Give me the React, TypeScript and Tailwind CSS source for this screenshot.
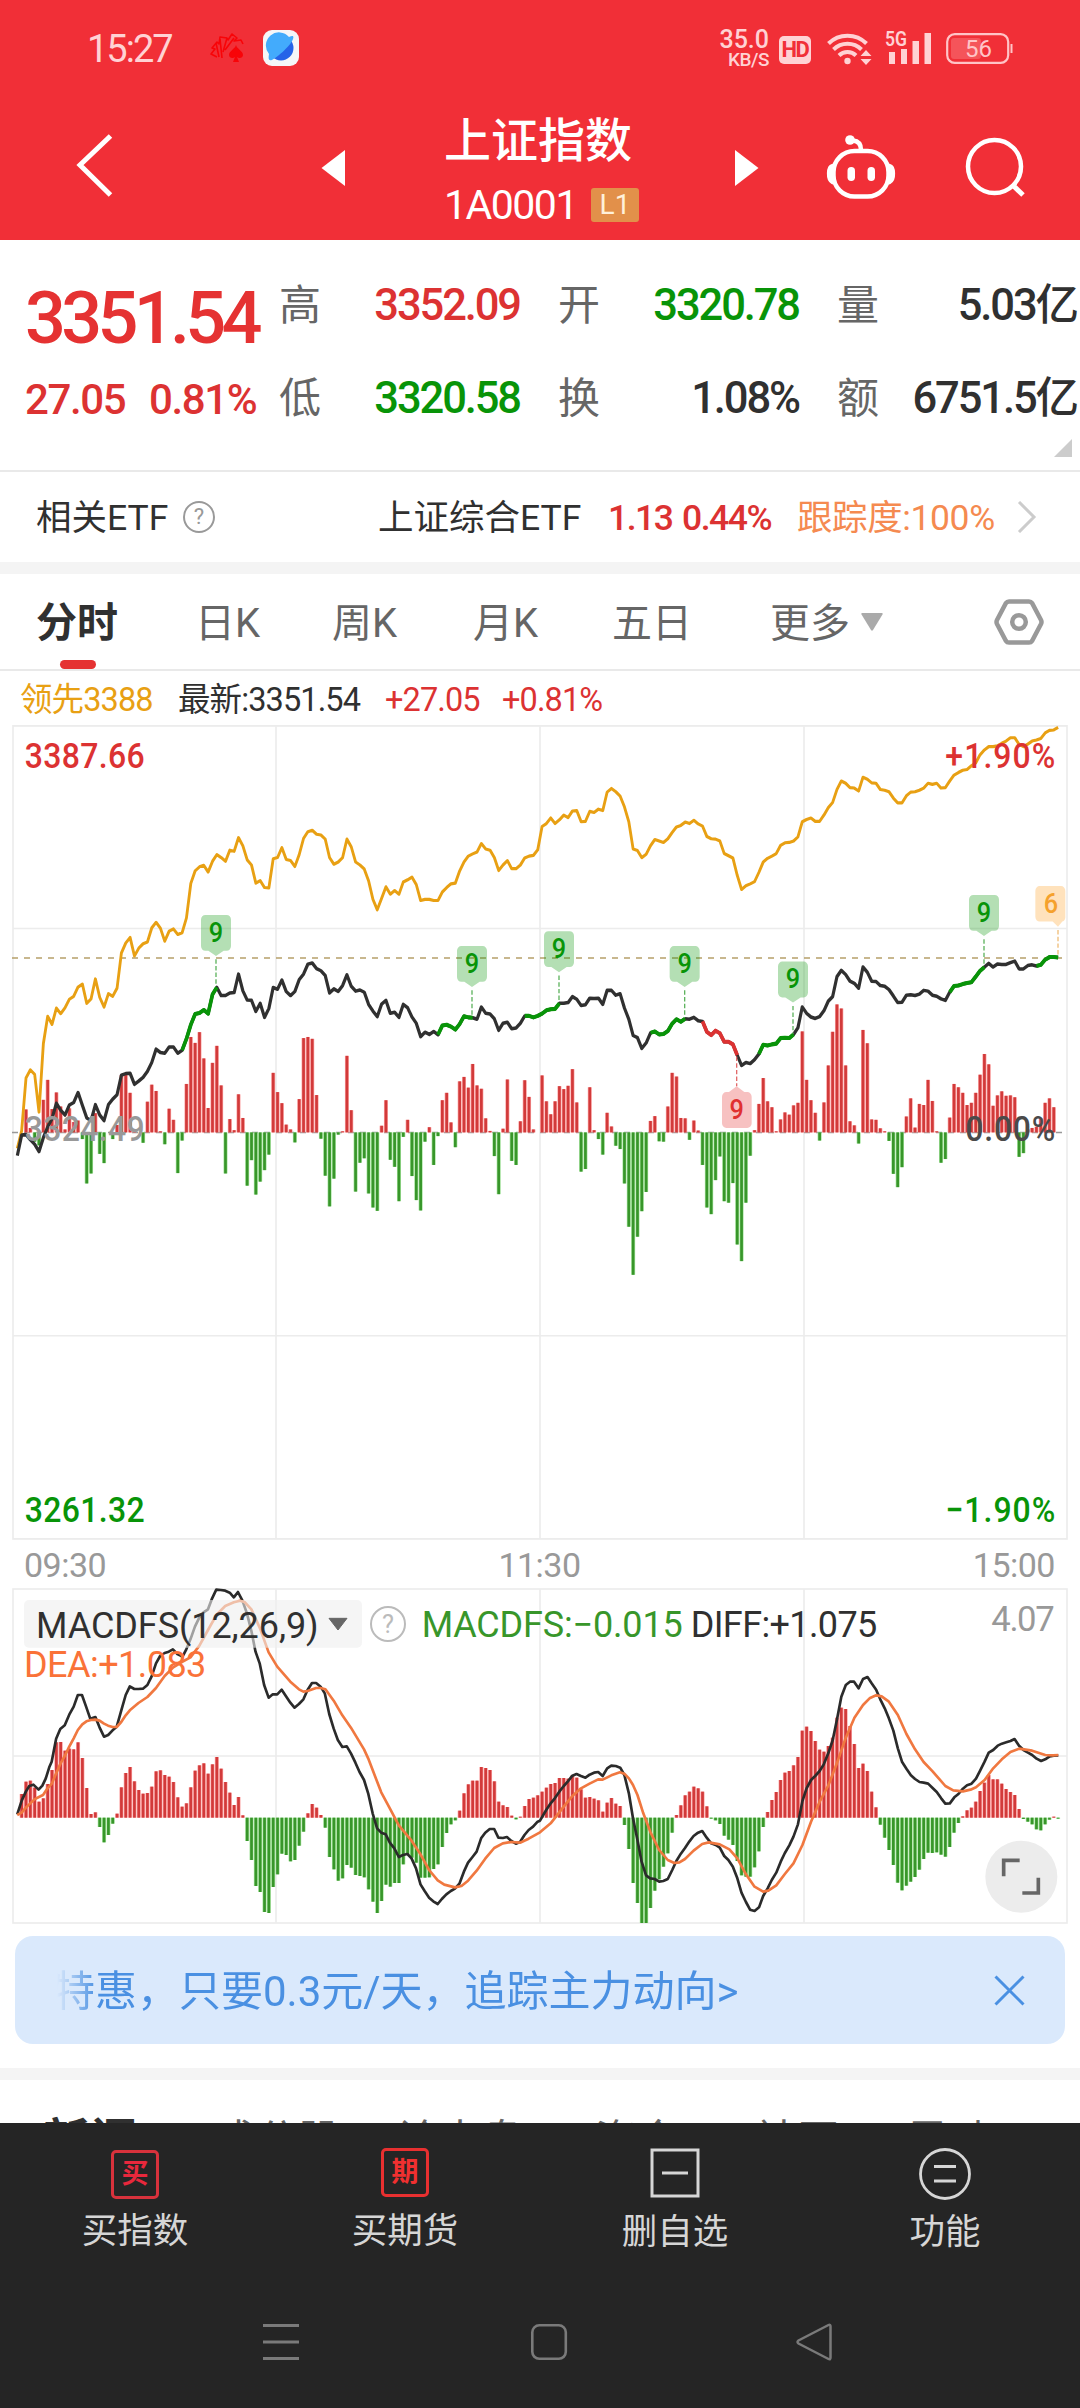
import type { ReactNode } from "react";

// Chart series are sampled once per minute, 241 samples from 09:30 to 15:00.
// The chart canvases use 3 units per css pixel horizontally.
const STEP = 13.01;
const START = 52;
const minuteX = (i: number) => START + STEP * i;

const LEAD = [
  1158, 1110, 968, 946, 958, 1060, 875, 801, 823, 779, 794, 778, 755, 747, 722, 714, 766, 754, 700, 750,
  776, 740, 747, 725, 630, 603, 588, 638, 617, 605, 600, 562, 547, 563, 598, 571, 565, 580, 575, 535,
  442, 408, 397, 393, 411, 382, 364, 372, 382, 352, 355, 318, 340, 378, 392, 441, 434, 453, 454, 375,
  372, 345, 377, 380, 396, 364, 320, 302, 298, 309, 311, 322, 372, 390, 384, 372, 322, 343, 384, 392,
  403, 435, 485, 513, 482, 451, 471, 461, 471, 438, 432, 425, 445, 488, 485, 485, 488, 488, 465, 453,
  443, 441, 408, 384, 368, 362, 357, 334, 349, 352, 372, 407, 392, 380, 402, 402, 392, 373, 368, 366,
  351, 288, 280, 265, 280, 270, 257, 264, 246, 245, 275, 274, 247, 250, 241, 245, 195, 185, 194, 206,
  235, 275, 349, 353, 372, 363, 340, 323, 327, 331, 321, 304, 289, 285, 276, 280, 271, 281, 287, 315,
  321, 322, 327, 361, 367, 373, 420, 458, 448, 443, 437, 412, 384, 374, 368, 361, 339, 332, 331, 327,
  316, 275, 269, 265, 274, 274, 257, 237, 223, 188, 165, 171, 183, 184, 192, 155, 160, 170, 171, 188,
  190, 194, 211, 224, 224, 205, 195, 194, 190, 184, 171, 174, 171, 184, 183, 165, 149, 142, 136, 134,
  124, 116, 94, 81, 72, 72, 70, 63, 57, 48, 48, 66, 72, 65, 57, 54, 50, 35, 28, 27, 20,
];

const PRICE = [
  1178, 1122, 1121, 1135, 1147, 1167, 1129, 1100, 1078, 1036, 1055, 1068, 1041, 1034, 1007, 1042, 1076, 1083, 1040, 1068,
  1083, 1040, 1025, 1013, 960, 956, 955, 985, 976, 966, 950, 926, 890, 899, 901, 884, 884, 901, 893, 862,
  824, 795, 792, 784, 794, 742, 723, 745, 745, 738, 737, 687, 732, 757, 758, 788, 766, 804, 780, 723,
  728, 703, 734, 745, 734, 702, 687, 660, 657, 672, 678, 691, 738, 727, 734, 718, 689, 720, 733, 730,
  736, 769, 787, 802, 768, 758, 793, 790, 804, 769, 778, 803, 820, 856, 844, 850, 842, 851, 826, 824,
  829, 837, 822, 801, 804, 805, 809, 776, 793, 795, 808, 839, 820, 817, 835, 833, 820, 800, 800, 804,
  800, 794, 785, 782, 781, 766, 766, 764, 748, 755, 772, 770, 752, 753, 752, 769, 731, 731, 744, 740,
  779, 809, 853, 859, 888, 873, 846, 842, 850, 849, 841, 821, 809, 816, 808, 809, 804, 813, 815, 843,
  852, 840, 847, 870, 870, 877, 906, 934, 926, 929, 918, 903, 878, 880, 877, 875, 860, 859, 860, 850,
  832, 776, 793, 803, 807, 802, 786, 760, 748, 694, 677, 688, 706, 712, 725, 668, 682, 706, 707, 718,
  720, 729, 746, 764, 763, 744, 743, 745, 741, 731, 733, 744, 747, 754, 758, 736, 719, 718, 714, 711,
  709, 694, 678, 668, 658, 668, 660, 661, 661, 656, 652, 673, 673, 664, 662, 665, 662, 648, 641, 641, 642,
];

const FLOW = [
  0, 0, 62, 12, -25, -35, 88, 142, 63, 108, 70, 8, 65, 28, 32, -18, -138, -111, 52, -58,
  -83, 0, -18, 20, 155, 155, 107, 2, 0, -28, 83, 129, 112, 3, -32, 64, 34, -110, -22, 131,
  258, 242, 271, 200, 66, 188, 234, 127, -111, 36, 6, 103, 39, -144, -75, -168, -133, -102, -60, 161,
  109, 79, 21, 8, -27, 90, 255, 258, 253, 101, -17, -117, -200, -125, -6, 3, 207, 60, -160, -82,
  -70, -165, -203, -212, 18, 87, -74, -93, -186, -12, 34, -118, -183, -211, -25, 14, -88, -10, 87, 107,
  27, -40, 138, 150, 121, 185, 127, 118, 38, 4, -64, -167, 10, 143, -77, -88, 30, 141, 96, 8,
  0, 154, 84, 49, 84, 125, 117, 126, 171, 81, -106, -99, 122, 6, -18, -60, 53, 16, -36, -45,
  -138, -255, -385, -282, -213, -161, 31, 44, -24, -25, 70, 161, 151, 39, 38, -20, 32, 5, -88, -203,
  -221, -129, -65, -186, -190, -137, -303, -348, -190, -63, 6, 77, 147, 84, 68, 3, 35, 54, 48, 73,
  80, 273, 142, 87, 53, -22, 81, 181, 272, 346, 335, 181, 30, 19, -30, 277, 241, 35, 34, 11,
  3, -23, -112, -148, -94, 43, 92, 13, 77, 74, 142, 85, 3, -82, -72, 40, 131, 122, 107, 74,
  80, 107, 156, 212, 184, 72, 100, 111, 99, 100, 95, -66, -56, 8, 12, 15, 38, 80, 92, 68, 0,
];

const MACD = [
  0, 71, 108, 111, 90, 48, 58, 101, 143, 226, 227, 201, 207, 205, 226, 179, 89, 11, 16, -28,
  -74, -52, -18, 12, 91, 134, 152, 109, 83, 72, 74, 93, 139, 142, 128, 123, 107, 61, 33, 43,
  91, 141, 157, 163, 132, 160, 182, 147, 107, 75, 38, 62, 7, -70, -127, -205, -223, -283, -286, -208,
  -170, -108, -112, -131, -127, -84, -42, 13, 41, 30, 8, -30, -118, -155, -189, -182, -142, -150, -172, -175,
  -179, -215, -252, -286, -250, -201, -207, -196, -196, -140, -110, -120, -135, -180, -180, -179, -154, -140, -88, -46,
  -20, -8, 21, 73, 100, 111, 111, 152, 149, 143, 109, 48, 37, 32, 6, -5, 3, 35, 56, 60,
  67, 78, 90, 101, 104, 119, 119, 117, 127, 120, 85, 60, 62, 57, 52, 18, 45, 59, 42, 35,
  -22, -94, -196, -256, -316, -316, -271, -219, -185, -147, -107, -45, 8, 37, 67, 78, 93, 88, 78, 34,
  -3, -8, -19, -54, -66, -82, -130, -173, -177, -177, -149, -101, -28, 17, 53, 77, 113, 135, 140, 157,
  182, 261, 273, 260, 230, 204, 198, 215, 240, 300, 330, 326, 275, 221, 149, 162, 140, 78, 31, -21,
  -60, -97, -142, -195, -218, -204, -192, -178, -156, -124, -105, -106, -104, -111, -117, -88, -45, -16, 4, 22,
  30, 48, 80, 105, 128, 115, 115, 102, 86, 77, 68, 26, -4, -12, -20, -35, -38, -20, -6, 3, -3,
];

const DIFF_AM =
  "50,1003 63,962 75,935 85,918 97,914 112,929 123,917 133,895 143,862 150,845 163,776 175,747 188,736 201,704 214,680 226,645 238,645 250,680 262,716 277,711 289,742 302,770 314,765 327,751 339,740 352,692 365,645 377,619 390,627 402,627 415,626 428,615 440,590 453,550 465,528 478,519 490,515 502,508 515,522 530,530 541,508 553,478 566,440 579,412 591,397 604,388 616,355 628,329 641,330 654,332 667,338 679,352 691,336 704,362 717,400 730,453 742,515 754,550 767,615 780,653 792,643 805,643 818,629 830,648 843,668 855,683 868,672 881,658 893,630 906,609 918,609 931,620 943,640 956,702 969,746 981,780 994,801 1007,799 1019,820 1032,848 1044,876 1057,900 1069,940 1082,1000 1095,1045 1107,1058 1120,1063 1132,1088 1145,1105 1158,1131 1170,1125 1183,1122 1195,1135 1208,1165 1221,1213 1233,1233 1246,1253 1258,1264 1271,1272 1283,1257 1296,1243 1309,1233 1321,1226 1334,1211 1347,1175 1359,1148 1372,1131 1384,1115 1397,1075 1409,1058 1422,1047 1435,1047 1447,1073 1460,1074 1472,1071 1485,1083 1498,1091 1510,1086 1523,1065 1535,1050 1548,1040 1561,1025";
const DIFF_PM =
  "0,1022 18,990 31,970 43,955 56,935 69,918 81,904 94,887 106,882 119,888 132,893 144,884 157,878 169,876 182,888 195,865 207,857 220,858 233,863 245,885 258,940 270,1015 283,1080 295,1145 308,1186 320,1195 333,1197 346,1205 358,1203 371,1197 384,1170 396,1143 409,1121 421,1104 434,1084 446,1068 459,1058 471,1053 484,1073 497,1090 510,1095 522,1103 535,1128 547,1140 560,1160 573,1195 585,1238 598,1266 610,1289 623,1293 636,1282 648,1248 661,1225 673,1200 686,1178 699,1145 711,1119 724,1096 736,1070 749,1033 762,963 774,925 787,900 799,888 812,873 824,853 837,820 850,780 862,720 875,650 888,615 900,605 912,605 925,625 938,597 951,591 963,610 976,629 988,658 1001,685 1013,715 1026,752 1039,805 1051,845 1064,866 1077,886 1089,897 1102,906 1114,908 1127,911 1140,924 1152,936 1165,955 1177,971 1190,970 1203,952 1215,942 1228,926 1240,916 1253,911 1266,896 1278,872 1291,845 1303,818 1316,810 1329,797 1341,791 1354,787 1366,783 1378,777 1391,797 1404,810 1417,818 1429,825 1442,836 1455,843 1467,838 1480,829 1492,827 1505,826";
const DEA_AM =
  "50,1005 63,998 75,983 88,970 100,958 113,951 125,945 138,925 151,910 163,880 176,850 188,828 201,800 214,775 226,750 239,733 251,724 264,720 277,719 289,722 302,731 314,737 327,741 339,741 352,726 365,706 377,691 402,669 428,651 453,624 478,588 503,562 528,546 553,532 579,497 604,450 629,404 654,378 679,367 697,362 710,366 730,388 755,445 780,517 805,560 843,605 868,628 881,635 893,633 918,624 931,624 945,628 969,662 994,706 1019,743 1057,808 1069,835 1107,937 1132,985 1158,1036 1195,1082 1221,1123 1246,1170 1271,1201 1290,1214 1321,1222 1340,1218 1359,1202 1384,1172 1409,1136 1435,1104 1460,1090 1485,1086 1510,1088 1535,1076 1568,1057";
const DEA_PM =
  "31,1030 69,980 94,948 119,925 144,911 169,898 182,899 207,886 232,877 245,881 258,895 270,915 283,945 300,1000 321,1057 346,1110 371,1140 390,1149 405,1147 421,1137 446,1112 471,1092 490,1087 522,1093 550,1108 573,1135 598,1183 623,1220 648,1235 663,1232 686,1216 711,1182 736,1150 762,1095 787,1025 812,965 837,917 862,850 888,773 913,713 938,675 957,655 976,646 992,649 1013,665 1039,705 1064,762 1089,808 1114,846 1140,874 1177,918 1200,931 1228,934 1250,929 1266,922 1291,900 1316,865 1341,838 1366,816 1391,806 1429,812 1467,825 1490,826 1505,825";

// The indicator lines are stored per session; afternoon x values restart at 0.
const SESSION = 1568;
const SESSION_SCALE = 1620 / SESSION;

function joinSessions(am: string, pm: string) {
  const read = (s: string, shift: number) =>
    s.split(" ").map((pair) => {
      const [x, y] = pair.split(",").map(Number);
      return `${((x + shift) * SESSION_SCALE).toFixed(1)},${y}`;
    });
  return [...read(am, 0), ...read(pm, SESSION)].join(" ");
}

function linePoints(series: number[], from = 0, to = series.length - 1) {
  return series
    .slice(from, to + 1)
    .map((y, k) => `${minuteX(from + k).toFixed(1)},${y}`)
    .join(" ");
}

function Bars({ data, base }: { data: number[]; base: number }) {
  const shown = data.map((v, i) => ({ v, i })).filter((d) => d.v !== 0);
  return (
    <g>
      {shown.map(({ v, i }) => (
        <g key={i}>
          <rect
            x={minuteX(i) - 6}
            y={v > 0 ? base - v : base}
            width={12}
            height={Math.abs(v)}
            fill={v > 0 ? "#fba3a3" : "#a4e39c"}
          />
          <rect
            x={minuteX(i) - 4}
            y={v > 0 ? base - v : base}
            width={8}
            height={Math.abs(v)}
            fill={v > 0 ? "#d23a3a" : "#38962a"}
          />
        </g>
      ))}
    </g>
  );
}

type LabelProps = {
  x: number;
  y: number;
  w: number;
  fill: string;
  size?: number;
  weight?: number;
  children: string;
};

function Label({ x, y, w, fill, size = 96, weight = 500, children }: LabelProps) {
  return (
    <text x={x} y={y} textLength={w} fill={fill} fontSize={size} fontWeight={weight}>
      {children}
    </text>
  );
}

const GREEN_RUNS = [[38, 46], [97, 105], [117, 125], [146, 154], [171, 179], [215, 223], [235, 240]];

const MARKERS = [
  { x: 648, top: 527, end: 718 },
  { x: 1416, top: 611, end: 800 },
  { x: 1677, top: 571, end: 762 },
  { x: 2054, top: 611, end: 805 },
  { x: 2379, top: 653, end: 848 },
  { x: 2952, top: 473, end: 665 },
];

function PriceChart() {
  return (
    <svg className="block h-[820px] w-[1080px]" viewBox="0 0 3240 2217" preserveAspectRatio="none">
      <g stroke="#ececec" strokeWidth={5} fill="none">
        <rect x={39} y={16} width={3162} height={2198} />
        <path d="M828 16V2214M1620 16V2214M2412 16V2214" />
        <path d="M39 564H3201M39 1665H3201" strokeWidth={4} />
      </g>
      <path d="M36 643.5H3204" stroke="#b7a06a" strokeWidth={4} strokeDasharray="18 18" />
      <path d="M36 1115H3204" stroke="#999" strokeWidth={4} strokeDasharray="18 18" />
      <Bars data={FLOW} base={1115} />
      <g fill="none" strokeLinejoin="round">
        <polyline points={linePoints(LEAD)} stroke="#e8a013" strokeWidth={8.5} />
        <polyline points={linePoints(PRICE)} stroke="#303030" strokeWidth={9.5} />
        {GREEN_RUNS.map(([a, b]) => (
          <polyline key={a} points={linePoints(PRICE, a, b)} stroke="#089408" strokeWidth={11} />
        ))}
        <polyline points={linePoints(PRICE, 158, 166)} stroke="#dc3232" strokeWidth={11} />
      </g>

      {MARKERS.map((m) => (
        <g key={m.x}>
          <path
            d={`M${m.x} ${m.top + 120}V${m.end}`}
            stroke="#5fb35f"
            strokeWidth={4}
            strokeDasharray="12 6"
          />
          <path
            d={`M${m.x - 32} ${m.top}h64a13 13 0 0 1 13 13v71a13 13 0 0 1-13 13h-9l-23 14l-23-14h-9a13 13 0 0 1-13-13v-71a13 13 0 0 1 13-13z`}
            fill="#089408"
            fillOpacity={0.3}
          />
          <text x={m.x} y={m.top + 72} textAnchor="middle" fontSize={76} fontWeight={500} fill="#089408">
            9
          </text>
        </g>
      ))}
      <path d="M2210 910V990" stroke="#e26a6a" strokeWidth={4} strokeDasharray="12 6" />
      <path
        d="M2179 1006h8l23-16l23 16h9a13 13 0 0 1 13 13v71a13 13 0 0 1-13 13h-63a13 13 0 0 1-13-13v-71a13 13 0 0 1 13-13z"
        fill="#e53333"
        fillOpacity={0.3}
      />
      <text x={2210} y={1078} textAnchor="middle" fontSize={76} fontWeight={500} fill="#e03030">
        9
      </text>
      <path d="M3174 568V640" stroke="#f0be78" strokeWidth={4} strokeDasharray="12 6" />
      <path
        d="M3119 449h64a13 13 0 0 1 13 13v71a13 13 0 0 1-9 12l-13 14l-16-14h-39a13 13 0 0 1-13-13v-70a13 13 0 0 1 13-13z"
        fill="#ff9f20"
        fillOpacity={0.3}
      />
      <text x={3153} y={521} textAnchor="middle" fontSize={76} fontWeight={500} fill="#f5a12c">
        6
      </text>

      <Label x={74} y={130} w={360} fill="#dc3232">3387.66</Label>
      <Label x={2836} y={130} w={330} fill="#dc3232">+1.90%</Label>
      <Label x={74} y={1137} w={360} fill="#999">3324.49</Label>
      <Label x={2896} y={1137} w={270} fill="#4a4a4a">0.00%</Label>
      <Label x={74} y={2168} w={360} fill="#089408">3261.32</Label>
      <Label x={2836} y={2168} w={330} fill="#089408">−1.90%</Label>
    </svg>
  );
}

function MacdChart() {
  return (
    <svg className="block h-[338px] w-[1080px]" viewBox="0 324 3240 1014">
      <g stroke="#ececec" strokeWidth={5} fill="none">
        <rect x={39} y={327} width={3162} height={1002} />
        <path d="M828 327V1329M1620 327V1329M2412 327V1329M39 828H3201" />
      </g>
      <Bars data={MACD} base={1013} />
      <g fill="none" strokeWidth={8} strokeLinejoin="round">
        <polyline points={joinSessions(DIFF_AM, DIFF_PM)} stroke="#2b2b2b" />
        <polyline points={joinSessions(DEA_AM, DEA_PM)} stroke="#f07840" />
      </g>
      <rect x={72} y={360} width={1014} height={143} rx={15} fill="#eeeeee" fillOpacity={0.6} />
      <Label x={108} y={474} w={848} size={108} weight={400} fill="#303030">MACDFS(12,26,9)</Label>
      <path d="M987 415h54l-27 35z" fill="#666" stroke="#666" strokeWidth={3} strokeLinejoin="round" />
      <circle cx={1164} cy={432} r={51} fill="none" stroke="#bbb" strokeWidth={6} />
      <text x={1164} y={458} textAnchor="middle" fontSize={76} fill="#bbb">?</text>
      <Label x={1265} y={471} w={783} size={108} weight={400} fill="#38962a">MACDFS:−0.015</Label>
      <Label x={2072} y={471} w={560} size={108} weight={400} fill="#303030">DIFF:+1.075</Label>
      <Label x={2974} y={452} w={190} size={104} weight={400} fill="#999">4.07</Label>
      <Label x={72} y={590} w={547} size={108} weight={400} fill="#fa7238">DEA:+1.083</Label>
      <circle cx={3064} cy={1190} r={108} fill="#ececec" />
      <path d="M3060 1141h-48v48M3068 1239h48v-46" transform="translate(-1 0)" fill="none" stroke="#666" strokeWidth={11} />
    </svg>
  );
}

function StatusBar() {
  return (
    <div className="flex h-24 items-center pl-[87px] text-[#ffd2d4]">
      <div className="w-[122px] pt-0.5 text-[38px] leading-none tracking-[-2px]">15:27</div>
      <svg className="h-9 w-9" viewBox="0 0 36 36">
        <g fill="none" stroke="#f80408" strokeWidth={1.6} strokeLinejoin="round">
          <path d="M8 27L2 24l4-5-3-1 5-6 2 2 1-7 7 1 1 2 4-6 5 4-3 3 7-1 2 4" />
          <path d="M10 27L7 13M13 28L11 9M14 22l4-14M16 20l9-12" />
        </g>
        <path d="M27 15c1 4 7 6 7 10 0 3-4 4-6 2l2 5h-6l2-5c-2 2-6 1-6-2 0-4 6-6 7-10z" fill="#f80408" />
      </svg>
      <svg className="ml-[18px] h-9 w-9" viewBox="0 0 36 36">
        <rect width={36} height={36} rx={9} fill="#f5f6f8" />
        <circle cx={18} cy={18} r={12.5} fill="#2563e8" />
        <path d="M6 24A13 13 0 0 1 26 7c4-2 5-1 4 2-2 6-15 18-21 21-3 1-4 0-3-6z" fill="#43abfc" />
      </svg>
      <div className="ml-[417px] flex w-[57px] flex-col items-end gap-px pr-1 pt-0.5">
        <span className="text-[25px] font-medium leading-[20px]">35.0</span>
        <span className="text-[19px] font-medium leading-[17px] tracking-[-0.5px]">KB/S</span>
      </div>
      <div className="ml-[6px] mt-[3px] flex h-7 w-8 items-center justify-center rounded-[5px] bg-[#ffd2d4] text-[22px] font-bold leading-none tracking-[-1.5px] text-[#f12f37]">
        HD
      </div>
      <svg className="ml-4 h-9 w-[46px]" viewBox="0 0 46 36">
        <g fill="none" stroke="#ffd2d4" strokeWidth={4}>
          <path d="M1.500 13.500a27 27 0 0 1 38 0M6.500 19.500a20 20 0 0 1 28 0M12 25.500a12 12 0 0 1 17 0" />
        </g>
        <circle cx={20.500} cy={31} r={3.200} fill="#ffd2d4" />
        <path d="M33.500 26h11l-5.500-6zM33.500 29h11l-5.500 6z" fill="#ffd2d4" />
      </svg>
      <svg className="ml-3 h-9 w-[48px]" viewBox="0 0 48 36">
        <text x={0} y={16} textLength={22} lengthAdjust="spacingAndGlyphs" fontSize={20} fontWeight={600} fill="#ffd2d4">
          5G
        </text>
        <path d="M4 22h6v12H4zM16 19h6v15h-6zM27.500 11h6.500v23h-6.500zM39.500 3h6.500v31h-6.500z" fill="#ffd2d4" />
      </svg>
      <svg className="ml-[13px] h-9 w-[68px]" viewBox="0 0 68 36">
        <rect x={1.200} y={4.200} width={61} height={28.600} rx={7.500} fill="none" stroke="#ffc4c7" strokeWidth={2.200} />
        <rect x={5} y={8} width={30} height={21} rx={3} fill="#f5545a" />
        <path d="M64.500 14h2v9h-2z" fill="#ffc4c7" />
        <text x={32.500} y={27} textAnchor="middle" fontSize={24} fill="#ffc4c7">56</text>
      </svg>
    </div>
  );
}

function Header() {
  return (
    <header className="h-60 bg-[#f12f37] text-white">
      <StatusBar />
      <div className="flex h-36 items-start">
        <svg className="ml-[74px] mt-[37px] h-[64px] w-10" viewBox="0 0 40 64">
          <path d="M36.500 3L6 32l30.500 30" fill="none" stroke="#fff" strokeWidth={5} />
        </svg>
        <svg className="ml-[207px] mt-[54px] h-[36px] w-6" viewBox="0 0 24 36">
          <path d="M24 0v36L.5 18z" fill="#fff" />
        </svg>
        <div className="ml-[99px] flex w-[203px] flex-col">
          <h1 className="mt-[20px] text-[47px] font-medium leading-[50px]">上证指数</h1>
          <div className="mt-[20px] flex h-[38px] items-center">
            <span className="w-[147px] text-[41px] leading-none tracking-[-1.500px]">1A0001</span>
            <span className="flex h-[34px] w-12 items-center justify-center rounded-[3px] bg-[#e2904a] text-[28px] leading-none text-[#fff0da]">
              L1
            </span>
          </div>
        </div>
        <svg className="ml-[88px] mt-[54px] h-[36px] w-6" viewBox="0 0 24 36">
          <path d="M0 0v36l23.500-18z" fill="#fff" />
        </svg>
        <svg className="ml-[66px] mt-[38px] h-[66px] w-[72px]" viewBox="0 0 72 66">
          <rect x={8.500} y={17} width={55} height={45.500} rx={21} fill="none" stroke="#fff" strokeWidth={4.500} />
          <path d="M36 16c0-6-3-9-8-9.500" fill="none" stroke="#fff" strokeWidth={4.500} />
          <circle cx={25} cy={6} r={4.800} fill="#fff" />
          <rect x={22.500} y={33} width={7.500} height={14} rx={3.700} fill="#fff" />
          <rect x={42.500} y={33} width={7.500} height={14} rx={3.700} fill="#fff" />
          <path d="M7 31c-5 1-6 15 0 18zM65 31c5 1 6 15 0 18z" fill="#fff" stroke="#fff" strokeWidth={2} />
        </svg>
        <svg className="ml-[67px] mt-[40px] h-[64px] w-16" viewBox="0 0 64 64">
          <circle cx={30.500} cy={30.500} r={26.500} fill="none" stroke="#fff" strokeWidth={4.500} />
          <path d="M48 48.500l11 10.500" stroke="#fff" strokeWidth={5} />
        </svg>
      </div>
    </header>
  );
}

const UP = "text-[#dc3232]";
const DOWN = "text-[#089408]";
const FLAT = "text-[#303030]";

function Stat({ name, value, color, width }: { name: string; value: string; color: string; width: string }) {
  return (
    <div className={`flex items-center justify-between ${width}`}>
      <span className="text-[42px] leading-none text-[#666]">{name}</span>
      <span className={`text-[43.500px] font-medium leading-none tracking-[-2.100px] ${color}`}>{value}</span>
    </div>
  );
}

function Quote() {
  return (
    <section className="relative flex h-[232px] border-b-2 border-[#e9e9e9]">
      <div className="w-[279px] pl-[25px]">
        <div className="mt-[41px] text-[72px] font-medium leading-[76px] tracking-[-4.700px] text-[#e53232]">3351.54</div>
        <div className={`mt-[21px] flex text-[42px] font-medium leading-[44px] tracking-[-1.400px] ${UP}`}>
          <span className="w-[124px]">27.05</span>
          <span>0.81%</span>
        </div>
      </div>
      <div className="flex flex-col">
        <div className="mt-[43px] flex h-[46px] gap-[38px]">
          <Stat name="高" value="3352.09" color={UP} width="w-[241px]" />
          <Stat name="开" value="3320.78" color={DOWN} width="w-[241px]" />
          <Stat name="量" value="5.03亿" color={FLAT} width="w-[240px]" />
        </div>
        <div className="mt-[47px] flex h-[46px] gap-[38px]">
          <Stat name="低" value="3320.58" color={DOWN} width="w-[241px]" />
          <Stat name="换" value="1.08%" color={FLAT} width="w-[241px]" />
          <Stat name="额" value="6751.5亿" color={FLAT} width="w-[240px]" />
        </div>
      </div>
      <svg className="absolute bottom-[13px] right-2 h-[18px] w-[18px]" viewBox="0 0 18 18">
        <path d="M18 0v18H0z" fill="#ccc" />
      </svg>
    </section>
  );
}

function EtfRow() {
  return (
    <section className="flex h-[90px] items-center pl-[36px] pt-[3px] text-[35.500px] leading-none text-[#303030]">
      <span className="w-[147px]">相关ETF</span>
      <span className="-mt-[3px] flex h-8 w-8 items-center justify-center rounded-full border-2 border-[#999] text-[22px] text-[#999]">
        ?
      </span>
      <span className="ml-[163px] w-[230px]">上证综合ETF</span>
      <span className={`w-[74px] font-medium tracking-[-1.500px] ${UP}`}>1.13</span>
      <span className={`w-[115px] font-medium tracking-[-1.500px] ${UP}`}>0.44%</span>
      <span className="w-[220px] tracking-[-0.400px] text-[#f58a50]">跟踪度:100%</span>
      <svg className="-mt-[3px] h-8 w-5" viewBox="0 0 20 32">
        <path d="M2 1l15 15L2 31" fill="none" stroke="#ccc" strokeWidth={3} />
      </svg>
    </section>
  );
}

function Tab({ width, children }: { width: string; children: ReactNode }) {
  return <div className={`flex h-full items-center pt-1 ${width}`}>{children}</div>;
}

function PeriodTabs() {
  return (
    <nav className="flex h-[97px] items-center border-b-2 border-[#e9e9e9] pl-9 text-[40px] leading-none text-[#666]">
      <div className="relative flex h-full w-[159px] items-center pt-1 text-[41px] font-bold text-[#303030]">
        分时
        <span className="absolute bottom-0 left-6 h-[9px] w-9 rounded-full bg-[#e53232]" />
      </div>
      <Tab width="w-[137px]">日K</Tab>
      <Tab width="w-[141px]">周K</Tab>
      <Tab width="w-[139px]">月K</Tab>
      <Tab width="w-[158px]">五日</Tab>
      <Tab width="w-[224px]">
        更多
        <svg className="-mt-1 ml-[11px] h-[18px] w-[22px]" viewBox="0 0 22 18">
          <path d="M1 0h20q1 0 .5 1.500L12 17q-1 1.500-2 0L.5 1.500Q0 0 1 0z" fill="#aaa" />
        </svg>
      </Tab>
      <svg className="h-[46px] w-[50px]" viewBox="0 0 50 46">
        <path
          d="M15 2.500h20q2 0 3 1.500l9 17q1 2 0 4l-9 17q-1 1.500-3 1.500H15q-2 0-3-1.500L3 25q-1-2 0-4l9-17q1-1.500 3-1.500z"
          fill="none"
          stroke="#999"
          strokeWidth={4.500}
        />
        <circle cx={25} cy={23} r={6.800} fill="none" stroke="#999" strokeWidth={4.500} />
      </svg>
    </nav>
  );
}

function Legend() {
  return (
    <div className="flex h-[49px] items-center pl-5 pt-[10px] text-[32.500px] leading-none tracking-[-0.900px]">
      <span className="w-[158px] text-[#e8a013]">领先3388</span>
      <span className="w-[207px] text-[#303030]">最新:3351.54</span>
      <span className={`w-[117px] ${UP}`}>+27.05</span>
      <span className={UP}>+0.81%</span>
    </div>
  );
}

function Promo() {
  return (
    <div className="mx-[15px] mt-[10px] flex h-[108px] items-center rounded-[18px] bg-[#dae9fc] pl-[42px] text-[42px] leading-none text-[#4a90e2]">
      <div className="w-[937px] pt-1 [mask-image:linear-gradient(to_right,transparent_0,black_40px)]">
        <span className="-ml-1">特惠，只要0.3元/天，追踪主力动向&gt;</span>
      </div>
      <svg className="h-[31px] w-[31px]" viewBox="0 0 31 31">
        <path d="M1.500 1.500l28 28M29.500 1.500l-28 28" stroke="#4a90e2" strokeWidth={3} />
      </svg>
    </div>
  );
}

function NewsTabs() {
  return (
    <div className="flex h-[43px] items-start overflow-hidden pl-[43px] pt-[38px] text-[42px] leading-[46px] text-[#666]">
      <span className="w-[171px] text-[47px] font-bold text-[#303030]">新闻</span>
      <span className="w-[183px] shrink-0">成分股</span>
      <span className="w-[198px] shrink-0">诊大盘</span>
      <span className="w-[160px] shrink-0">资金</span>
      <span className="w-[152px] shrink-0">社区</span>
      <span className="shrink-0">异动</span>
    </div>
  );
}

function Action({ icon, label }: { icon: ReactNode; label: string }) {
  return (
    <div className="flex w-[270px] flex-col items-center">
      {icon}
      <span className="mt-[17px] text-[35.500px] leading-none text-[#d6d6d6]">{label}</span>
    </div>
  );
}

function BottomBar() {
  return (
    <footer className="h-[285px] bg-[#252525]">
      <div className="flex h-[150px] pt-[25px]">
        <Action
          label="买指数"
          icon={
            <div className="mt-0.5 -mb-0.5 flex h-[49px] w-12 items-center justify-center rounded-[5px] border-3 border-[#d8323c] text-[27px] font-bold leading-none text-[#e8283c]">
              买
            </div>
          }
        />
        <Action
          label="买期货"
          icon={
            <div className="flex h-[49px] w-12 items-center justify-center rounded-[5px] border-3 border-[#e83030] text-[27px] font-bold leading-none text-[#f03030]">
              期
            </div>
          }
        />
        <Action
          label="删自选"
          icon={
            <svg className="h-[50px] w-[50px]" viewBox="0 0 50 50">
              <path d="M2 2h46v46H2zM12 25h26" fill="none" stroke="#d6d6d6" strokeWidth={3} />
            </svg>
          }
        />
        <Action
          label="功能"
          icon={
            <svg className="-mb-0.5 h-[52px] w-[52px]" viewBox="0 0 52 52">
              <circle cx={26} cy={26} r={24.500} fill="none" stroke="#d6d6d6" strokeWidth={2.800} />
              <path d="M15 18.500h22M15 33h22" stroke="#d6d6d6" strokeWidth={3} />
            </svg>
          }
        />
      </div>
      <div className="flex pl-[261px] pt-[49px]">
        <svg className="h-10 w-10" viewBox="0 0 40 40">
          <path d="M2 3.500h36M2 20h36M2 36.500h36" stroke="#7a7a7a" strokeWidth={3} />
        </svg>
        <svg className="ml-[228px] h-10 w-10" viewBox="0 0 40 40">
          <rect x={3.300} y={3.300} width={33.500} height={33.500} rx={7} fill="none" stroke="#7a7a7a" strokeWidth={2.600} />
        </svg>
        <svg className="ml-[226px] h-10 w-10" viewBox="0 0 40 40">
          <path
            d="M33.500 3L3.500 18.500q-2 1.500 0 3L33.500 37q2 1 2-1.500v-31q0-2.500-2-1.500z"
            fill="none"
            stroke="#7a7a7a"
            strokeWidth={2.500}
          />
        </svg>
      </div>
    </footer>
  );
}

export default function App() {
  return (
    <div className="flex h-[2408px] w-[1080px] flex-col overflow-hidden whitespace-nowrap bg-white font-[Roboto,'Noto_Sans_CJK_SC',sans-serif]">
      <Header />
      <Quote />
      <EtfRow />
      <div className="h-3 bg-[#f4f4f4]" />
      <PeriodTabs />
      <Legend />
      <PriceChart />
      <div className="flex h-12 items-center justify-between pl-[24px] pr-[25px] pt-0.5 text-[34px] leading-none tracking-[-0.500px] text-[#999]">
        <span>09:30</span>
        <span>11:30</span>
        <span>15:00</span>
      </div>
      <MacdChart />
      <Promo />
      <div className="mt-6 h-3 bg-[#f4f4f4]" />
      <NewsTabs />
      <BottomBar />
    </div>
  );
}
